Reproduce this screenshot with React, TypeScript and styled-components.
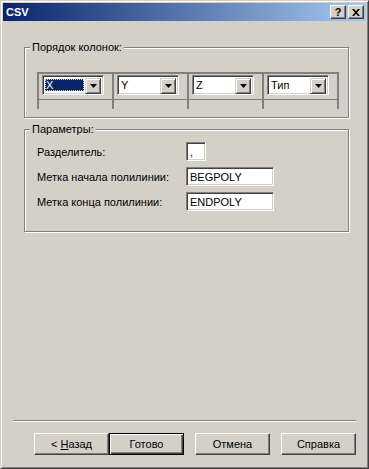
import React from 'react';
import styled, { createGlobalStyle, css } from 'styled-components';

const GlobalStyle = createGlobalStyle`
  html, body {
    margin: 0;
    padding: 0;
    background: #d4d0c8;
  }
  body {
    font-family: "Liberation Sans", Arial, sans-serif;
    font-size: 11px;
    color: #000;
  }
  * {
    box-sizing: border-box;
  }
`;

const sunken = css`
  border: 1px solid;
  border-color: #808080 #fff #fff #808080;
  box-shadow: inset 1px 1px 0 #404040, inset -1px -1px 0 #d4d0c8;
`;

const raised = css`
  border: 1px solid;
  border-color: #fff #404040 #404040 #fff;
  box-shadow: inset -1px -1px 0 #808080;
`;

const Window = styled.div`
  width: 369px;
  height: 469px;
  background: #d4d0c8;
  border: 1px solid;
  border-color: #d4d0c8 #404040 #404040 #d4d0c8;
  box-shadow: inset 1px 1px 0 #fff, inset -1px -1px 0 #808080;
  padding: 2px;
  display: flex;
  flex-direction: column;
`;

const TitleBar = styled.div`
  height: 18px;
  display: flex;
  align-items: center;
  padding: 0 2px 0 3px;
  background: linear-gradient(to right, #0a246a, #a6caf0);
`;

const TitleText = styled.span`
  color: #fff;
  font-weight: bold;
  font-size: 11px;
`;

const TitleButtons = styled.div`
  margin-left: auto;
  display: flex;
  gap: 2px;
`;

const TitleButton = styled.div`
  ${raised};
  width: 16px;
  height: 14px;
  background: #d4d0c8;
  display: flex;
  align-items: center;
  justify-content: center;
  font-weight: bold;
  font-size: 11px;
  line-height: 1;
`;

const Content = styled.div`
  flex: 1;
  display: flex;
  flex-direction: column;
  padding: 20px 0 0 21px;
`;

const GroupBox = styled.fieldset<{ $pad: string; $top?: number }>`
  margin: ${(p) => p.$top ?? 0}px 0 0 0;
  width: 325px;
  min-width: 0;
  border: 1px solid #808080;
  box-shadow: 1px 1px 0 #fff, inset 1px 1px 0 #fff;
  padding: ${(p) => p.$pad};
`;

const Legend = styled.legend`
  margin-left: -7px;
  padding: 0 2px;
  line-height: 13px;
  background: #d4d0c8;
`;

const HeaderGrid = styled.div`
  width: 302px;
  display: grid;
  grid-template-columns: repeat(4, 75px);
  border-top: 2px solid #808080;
  border-right: 2px solid #808080;
`;

const Column = styled.div`
  border-left: 2px solid #808080;
  display: flex;
  flex-direction: column;
`;

const ColumnHead = styled.div`
  padding: 1px 0 4px 3px;
  border-bottom: 1px solid #808080;
`;

const ColumnBody = styled.div`
  height: 9px;
`;

const Combo = styled.div`
  ${sunken};
  width: 62px;
  height: 20px;
  padding: 2px;
  background: #fff;
  display: flex;
`;

const ComboField = styled.div<{ $selected?: boolean }>`
  flex: 1;
  display: flex;
  align-items: center;
  padding-left: 1px;
  ${(p) =>
    p.$selected &&
    css`
      margin: 1px 1px 1px 0;
      background: #0a246a;
      color: #fff;
      outline: 1px dotted #e8d890;
      outline-offset: -1px;
    `}
`;

const ComboButton = styled.div`
  width: 16px;
  height: 16px;
  border: 1px solid;
  border-color: #d4d0c8 #404040 #404040 #d4d0c8;
  box-shadow: inset 1px 1px 0 #fff, inset -1px -1px 0 #808080;
  background: #d4d0c8;
  display: flex;
  align-items: center;
  justify-content: center;
`;

const ParamList = styled.div`
  display: flex;
  flex-direction: column;
  gap: 6px;
`;

const ParamRow = styled.div`
  display: flex;
  align-items: center;
  height: 19px;
`;

const ParamLabel = styled.span`
  width: 149px;
`;

const TextBox = styled.div<{ $width: number }>`
  ${sunken};
  width: ${(p) => p.$width}px;
  height: 19px;
  background: #fff;
  padding: 0 0 0 3px;
  display: flex;
  align-items: center;
`;

const Footer = styled.div`
  display: flex;
  flex-direction: column;
`;

const Separator = styled.div`
  height: 2px;
  margin: 0 10px;
  border-top: 1px solid #808080;
  border-bottom: 1px solid #fff;
`;

const ButtonRow = styled.div`
  display: flex;
  padding: 11px 0 11px 31px;
`;

const Button = styled.div<{ $default?: boolean; $gap?: number }>`
  width: 75px;
  height: 22px;
  margin-left: ${(p) => p.$gap ?? 0}px;
  display: flex;
  align-items: center;
  justify-content: center;
  background: #d4d0c8;
  ${(p) =>
    p.$default
      ? css`
          border: 1px solid #000;
          box-shadow: inset 1px 1px 0 #fff, inset -1px -1px 0 #404040,
            inset -2px -2px 0 #808080;
        `
      : raised};
`;

const ArrowDown = () => (
  <svg width="7" height="4" viewBox="0 0 7 4">
    <path d="M0 0h7L3.5 4z" fill="#000" />
  </svg>
);

const CloseGlyph = () => (
  <svg width="8" height="7" viewBox="0 0 8 7">
    <path d="M0 0h2l2 2.2L6 0h2L5 3.5 8 7H6L4 4.8 2 7H0l3-3.5z" fill="#000" />
  </svg>
);

const columns = ['X', 'Y', 'Z', 'Тип'];

const params = [
  { label: 'Разделитель:', value: ',', width: 20 },
  { label: 'Метка начала полилинии:', value: 'BEGPOLY', width: 88 },
  { label: 'Метка конца полилинии:', value: 'ENDPOLY', width: 88 },
];

export default function App() {
  return (
    <>
      <GlobalStyle />
      <Window>
        <TitleBar>
          <TitleText>CSV</TitleText>
          <TitleButtons>
            <TitleButton>?</TitleButton>
            <TitleButton>
              <CloseGlyph />
            </TitleButton>
          </TitleButtons>
        </TitleBar>

        <Content>
          <GroupBox $pad="18px 0 8px 12px">
            <Legend>Порядок колонок:</Legend>
            <HeaderGrid>
              {columns.map((c, i) => (
                <Column key={c}>
                  <ColumnHead>
                    <Combo>
                      <ComboField $selected={i === 0}>{c}</ComboField>
                      <ComboButton>
                        <ArrowDown />
                      </ComboButton>
                    </Combo>
                  </ColumnHead>
                  <ColumnBody />
                </Column>
              ))}
            </HeaderGrid>
          </GroupBox>

          <GroupBox $pad="6px 0 20px 12px" $top={5}>
            <Legend>Параметры:</Legend>
            <ParamList>
              {params.map((p) => (
                <ParamRow key={p.label}>
                  <ParamLabel>{p.label}</ParamLabel>
                  <TextBox $width={p.width}>{p.value}</TextBox>
                </ParamRow>
              ))}
            </ParamList>
          </GroupBox>
        </Content>

        <Footer>
          <Separator />
          <ButtonRow>
            <Button>
              &lt;&nbsp;<u>Н</u>азад
            </Button>
            <Button $default>Готово</Button>
            <Button $gap={11}>Отмена</Button>
            <Button $gap={11}>Справка</Button>
          </ButtonRow>
        </Footer>
      </Window>
    </>
  );
}
